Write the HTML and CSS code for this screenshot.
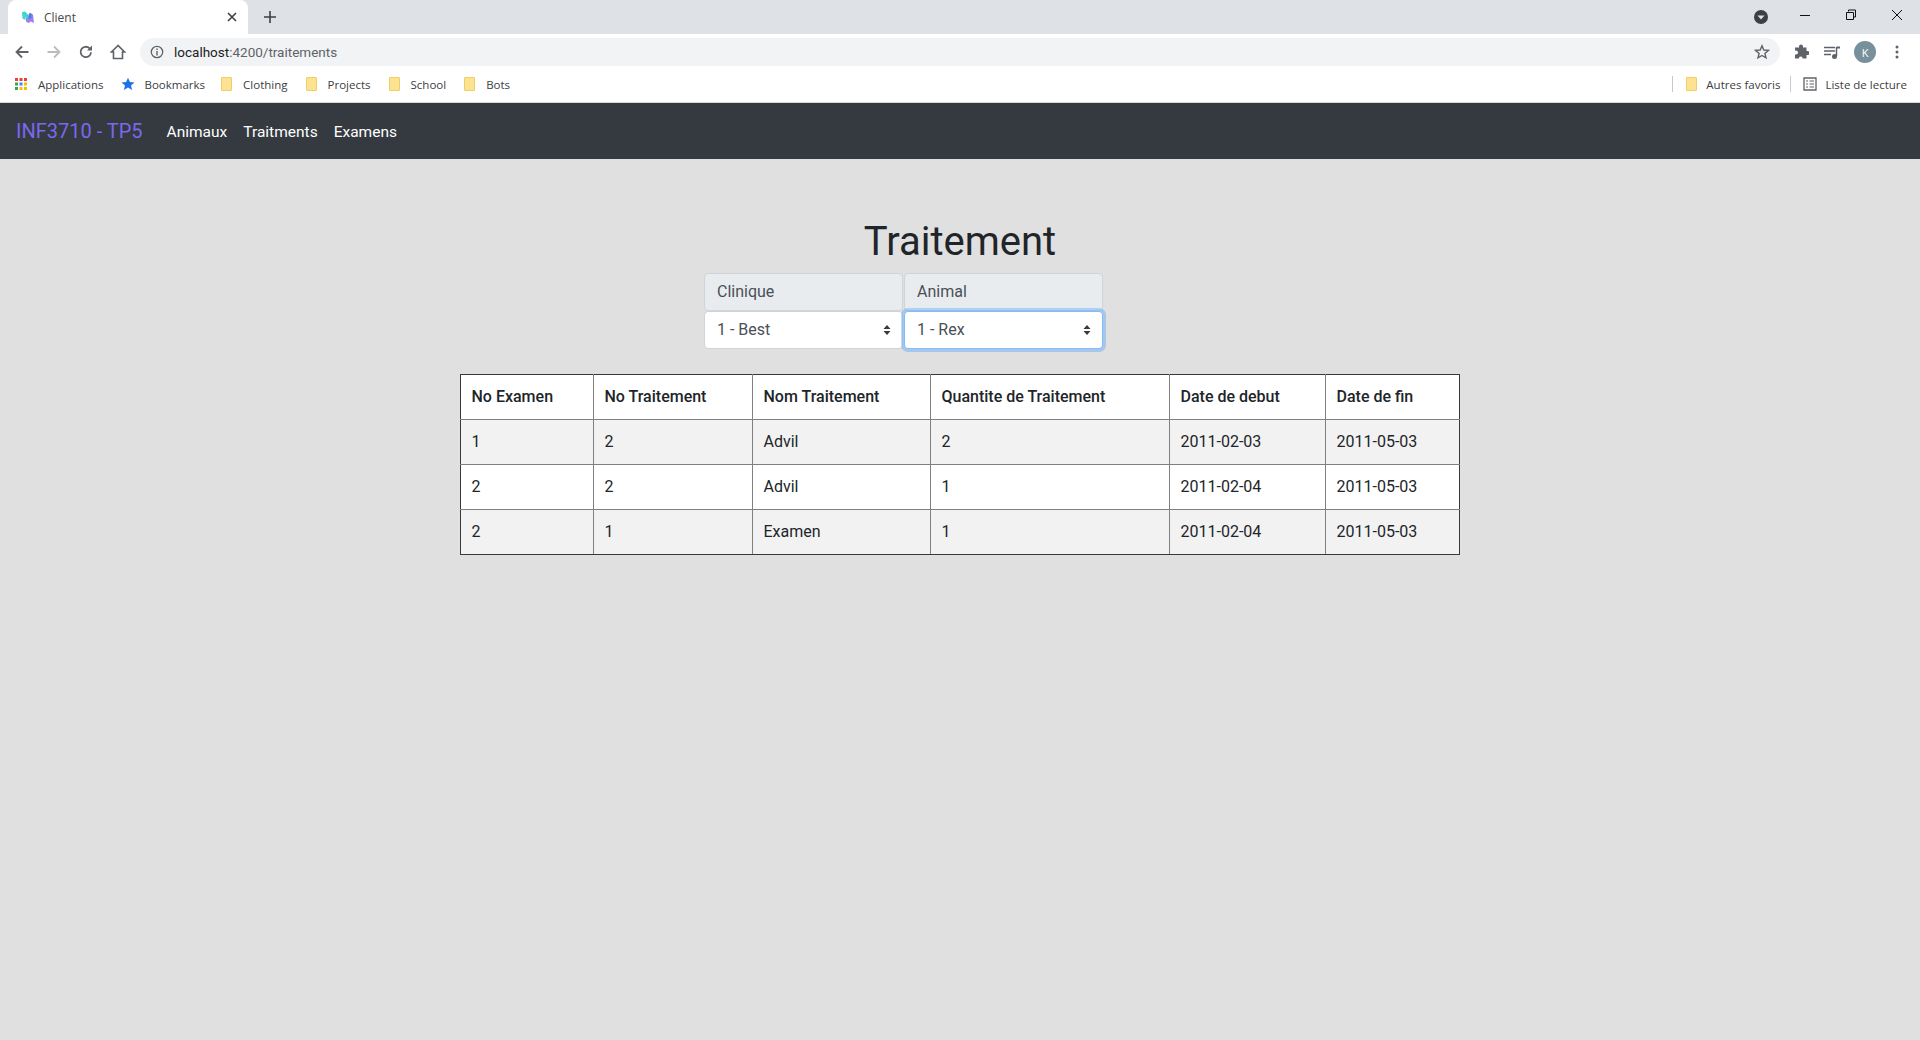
FILE: index.html
```html
<!DOCTYPE html>
<html lang="fr">
<head>
<meta charset="utf-8">
<title>Client</title>
<link rel="stylesheet" href="styles.css">
</head>
<body>
<div class="browser">
  <div class="tabstrip">
    <div class="tab">
      <svg class="favicon" viewBox="0 0 12 12" width="12" height="12"><path d="M4 3 L6.5 5.5 L7.5 2 L11 3.5 L12 12 L9 10.5 L6.5 12 L4 10.5Z" fill="#a07cf5"/><path d="M0 1 L3 .5 L6.5 4 L6.5 8 L3.5 6 L3.5 9 L.5 7.5Z" fill="#3fd6d0"/><path d="M6.5 4 L8 2 L9.5 2.5 L9.5 7 L6.5 8Z" fill="#4a7fe0"/></svg>
      <span class="tab-title">Client</span>
      <svg class="tab-close" viewBox="0 0 10 10" width="10" height="10"><path d="M1 1L9 9M9 1L1 9" stroke="#3c4043" stroke-width="1.6"/></svg>
    </div>
    <svg class="new-tab" viewBox="0 0 12 12" width="12" height="12"><path d="M6 0V12M0 6H12" stroke="#3c4043" stroke-width="1.6"/></svg>
    <div class="spacer"></div>
    <svg class="media-btn" viewBox="0 0 14 14" width="14" height="14"><circle cx="7" cy="7" r="7" fill="#3c4043"/><path d="M3.5 5.5H10.5L7 9.5Z" fill="#dee1e6"/></svg>
    <div class="win-btns">
      <svg viewBox="0 0 12 12" width="12" height="12"><path d="M1 6.5H11" stroke="#111" stroke-width="1"/></svg>
      <svg viewBox="0 0 12 12" width="12" height="12"><path d="M3.5 2.5V1H10.5V8H9M1.5 3.5H8.5V10.5H1.5Z" fill="none" stroke="#111" stroke-width="1"/></svg>
      <svg viewBox="0 0 12 12" width="12" height="12"><path d="M1 1L11 11M11 1L1 11" stroke="#111" stroke-width="1"/></svg>
    </div>
  </div>
  <div class="toolbar">
    <svg class="tool" viewBox="0 0 16 16" width="16" height="16"><path d="M14.5 8H2.5M8 2.5L2.5 8L8 13.5" fill="none" stroke="#5f6368" stroke-width="1.8"/></svg>
    <svg class="tool" viewBox="0 0 16 16" width="16" height="16"><path d="M1.5 8H13.5M8 2.5L13.5 8L8 13.5" fill="none" stroke="#babcbe" stroke-width="1.8"/></svg>
    <svg class="tool" viewBox="0 0 16 16" width="16" height="16"><path d="M13 8.2A5.2 5.2 0 1 1 11.6 4.4" fill="none" stroke="#5f6368" stroke-width="1.8"/><path d="M14 1.5V6.5H9Z" fill="#5f6368"/></svg>
    <svg class="tool" viewBox="0 0 16 16" width="16" height="16"><path d="M8 1.5L1.5 8H3.5V14.5H12.5V8H14.5Z" fill="none" stroke="#5f6368" stroke-width="1.6"/></svg>
    <div class="omnibox">
      <svg class="info" viewBox="0 0 14 14" width="14" height="14"><circle cx="7" cy="7" r="5.7" fill="none" stroke="#5f6368" stroke-width="1.3"/><path d="M7 6V10.5M7 3.5V5" stroke="#5f6368" stroke-width="1.4"/></svg>
      <span class="url"><span class="url-host">localhost</span>:4200/traitements</span>
      <div class="spacer"></div>
      <svg class="star" viewBox="0 0 16 16" width="16" height="16"><path d="M8 1.8L9.8 6L14.4 6.4L10.9 9.4L12 13.9L8 11.5L4 13.9L5.1 9.4L1.6 6.4L6.2 6Z" fill="none" stroke="#5f6368" stroke-width="1.4"/></svg>
    </div>
    <svg class="ext" viewBox="0 0 16 16" width="16" height="16"><path d="M6 2.5A2 2 0 0 1 10 2.5V3.5H13.5V7H14.5A2 2 0 0 1 14.5 11H13.5V14.5H9.5V13.5A2 2 0 0 0 6 13.5V14.5H2V10.5H3A2 2 0 0 0 3 6.5H2V3.5H6Z" fill="#5f6368"/></svg>
    <svg class="ext" viewBox="0 0 16 16" width="16" height="16"><path d="M0 3.5H11M0 7H11M0 10.5H7" stroke="#5f6368" stroke-width="1.3"/><path d="M12.5 3V12" stroke="#5f6368" stroke-width="1.5"/><path d="M12.5 2.5H16V4.5H12.5Z" fill="#5f6368"/><circle cx="10.5" cy="12.5" r="2.5" fill="#5f6368"/></svg>
    <div class="avatar">K</div>
    <svg class="dots" viewBox="0 0 4 16" width="4" height="16"><circle cx="2" cy="3" r="1.5" fill="#5f6368"/><circle cx="2" cy="8" r="1.5" fill="#5f6368"/><circle cx="2" cy="13" r="1.5" fill="#5f6368"/></svg>
  </div>
  <div class="bookmarks">
    <span class="bm bm-apps">
      <svg class="apps" viewBox="0 0 12 12" width="12" height="12">
        <rect x="0" y="0" width="3" height="3" fill="#ea4335"/><rect x="4.5" y="0" width="3" height="3" fill="#ea4335"/><rect x="9" y="0" width="3" height="3" fill="#ea4335"/>
        <rect x="0" y="4.5" width="3" height="3" fill="#34a853"/><rect x="4.5" y="4.5" width="3" height="3" fill="#4285f4"/><rect x="9" y="4.5" width="3" height="3" fill="#fbbc05"/>
        <rect x="0" y="9" width="3" height="3" fill="#34a853"/><rect x="4.5" y="9" width="3" height="3" fill="#fbbc05"/><rect x="9" y="9" width="3" height="3" fill="#fbbc05"/>
      </svg>Applications</span>
    <span class="bm bm-star"><svg class="bm-icon" viewBox="0 0 14 14" width="14" height="14"><path d="M7 .8L8.9 5L13.5 5.4L10 8.4L11.1 13L7 10.5L2.9 13L4 8.4L.5 5.4L5.1 5Z" fill="#1a73e8"/></svg>Bookmarks</span>
    <span class="bm"><span class="folder"></span>Clothing</span>
    <span class="bm"><span class="folder"></span>Projects</span>
    <span class="bm"><span class="folder"></span>School</span>
    <span class="bm"><span class="folder"></span>Bots</span>
    <div class="spacer"></div>
    <span class="sep"></span>
    <span class="bm bm-other"><span class="folder"></span>Autres favoris</span>
    <span class="sep"></span>
    <span class="bm bm-read"><svg class="bm-icon" viewBox="0 0 14 14" width="14" height="14"><path d="M1 1H13V13H1Z" fill="none" stroke="#5f6368" stroke-width="1.3"/><path d="M3 4H5M6.5 4H11M3 7H5M6.5 7H11M3 10H5M6.5 10H11" stroke="#5f6368" stroke-width="1.2"/></svg>Liste de lecture</span>
  </div>
</div>
<nav class="navbar">
  <a class="brand">INF3710 - TP5</a>
  <a class="nav-link">Animaux</a>
  <a class="nav-link">Traitments</a>
  <a class="nav-link">Examens</a>
</nav>
<main class="content">
  <h1 class="title">Traitement</h1>
  <div class="selectors">
    <div class="group">
      <div class="group-label">Clinique</div>
      <div class="select"><span>1 - Best</span><svg class="caret" viewBox="0 0 8 10" width="8" height="10"><path d="M4 0L7.5 4H.5ZM4 10L.5 6H7.5Z" fill="#343a40"/></svg></div>
    </div>
    <div class="group">
      <div class="group-label">Animal</div>
      <div class="select focused"><span>1 - Rex</span><svg class="caret" viewBox="0 0 8 10" width="8" height="10"><path d="M4 0L7.5 4H.5ZM4 10L.5 6H7.5Z" fill="#343a40"/></svg></div>
    </div>
  </div>
  <table class="data">
    <colgroup>
      <col class="c1"><col class="c2"><col class="c3"><col class="c4"><col class="c5"><col class="c6">
    </colgroup>
    <thead>
      <tr><th>No Examen</th><th>No Traitement</th><th>Nom Traitement</th><th>Quantite de Traitement</th><th>Date de debut</th><th>Date de fin</th></tr>
    </thead>
    <tbody>
      <tr class="odd"><td>1</td><td>2</td><td>Advil</td><td>2</td><td>2011-02-03</td><td>2011-05-03</td></tr>
      <tr><td>2</td><td>2</td><td>Advil</td><td>1</td><td>2011-02-04</td><td>2011-05-03</td></tr>
      <tr class="odd"><td>2</td><td>1</td><td>Examen</td><td>1</td><td>2011-02-04</td><td>2011-05-03</td></tr>
    </tbody>
  </table>
</main>
</body>
</html>
```
FILE: styles.css
```css
* { box-sizing: border-box; }
html, body { height: 100%; margin: 0; }
body {
  background: #e0e0e0;
  font-family: Roboto, "Liberation Sans", sans-serif;
  color: #212529;
  overflow: hidden;
  display: flex;
  flex-direction: column;
}
.spacer { flex: 1; }
.browser { background: #fff; height: 103px; flex: none; border-bottom: 1px solid #d6d7d9; font-family: "Open Sans", "Noto Sans", sans-serif; }
.tabstrip { height: 34px; background: #dee1e6; display: flex; align-items: center; padding-left: 8px; }
.tab { width: 240px; height: 34px; background: #fff; border-radius: 8px 8px 0 0; display: flex; align-items: center; padding-left: 14px; padding-right: 11px; }
.favicon { margin-right: 10px; }
.tab-title { font-size: 12px; color: #45484c; flex: 1; }
.new-tab { margin-left: 16px; }
.media-btn { margin-right: 31px; }
.win-btns { display: flex; gap: 34px; padding-right: 17px; margin-top: -5px; }
.toolbar { height: 34px; padding-top: 2px; display: flex; align-items: center; padding-left: 14px; }
.tool { margin-right: 16px; }
.omnibox { width: 1640px; height: 28px; margin-left: -2px; background: #f1f3f4; border-radius: 14px; display: flex; align-items: center; padding: 0 10px; margin-right: 13px; }
.info { margin-right: 10px; }
.url { font-size: 13.5px; color: #5f6368; font-family: Roboto, sans-serif; }
.url-host { color: #202124; }
.ext { margin-right: 15px; }
.avatar { width: 22px; height: 22px; border-radius: 50%; background: #78909c; color: #fff; font-size: 11px; display: flex; align-items: center; justify-content: center; margin-left: -1px; margin-right: 19px; }
.bookmarks { height: 34px; padding-bottom: 2px; display: flex; align-items: center; padding-left: 15px; padding-right: 13px; font-size: 11.5px; color: #3c4043; }
.bm { display: inline-flex; align-items: center; margin-right: 18px; }
.bm-apps { margin-right: 17px; }
.bm-star { margin-right: 16px; }
.apps { margin-right: 11px; }
.bm-icon { margin-right: 10px; }
.folder { width: 11px; height: 14px; margin-right: 11px; background: #fde293; border: 1px solid #f0cf62; border-radius: 1px; }
.bm-other { margin-left: 13px; margin-right: 10px; }
.bm-other .folder { margin-right: 9px; }
.bm-read { margin-left: 12px; margin-right: 0; }
.bm-read .bm-icon { margin-right: 8px; }
.sep { width: 1px; height: 16px; background: #c8c9cb; }
.navbar { height: 56px; flex: none; background: #343a40; display: flex; align-items: center; padding: 0 16px; }
.brand { font-size: 20px; color: #7b68ee; margin-right: 24px; }
.nav-link { font-size: 15.5px; color: #fff; margin-right: 16px; padding-top: 1px; }
.content { display: flex; flex-direction: column; align-items: center; }
.title { font-size: 40px; font-weight: 400; line-height: 48px; margin: 59px 0 7px; }
.selectors { display: flex; gap: 1px; margin-bottom: 25px; margin-right: 113px; }
.group { width: 199px; }
.group-label { height: 38px; background: #e9ecef; border: 1px solid #ced4da; border-radius: 4px; padding: 6px 12px; font-size: 16px; line-height: 24px; color: #495057; }
.select { height: 38px; background: #fff; border: 1px solid #ced4da; border-radius: 4px; padding: 6px 11px 6px 12px; font-size: 16px; line-height: 24px; color: #495057; display: flex; align-items: center; justify-content: space-between; }
.select.focused { border-color: #80bdff; box-shadow: 0 0 0 3px rgba(0,123,255,.25); }
.data { width: 999px; margin-right: 1px; table-layout: fixed; border-collapse: collapse; font-size: 16px; line-height: 24px; }
.c1 { width: 133px; } .c2 { width: 159px; } .c3 { width: 178px; } .c4 { width: 239px; } .c5 { width: 156px; } .c6 { width: 134px; }
.data th, .data td { border: 1px solid #808080; padding: 10px 10px 10px 11px; text-align: left; background: #fff; height: 45px; }
.data th { font-weight: 500; border-top-color: #343a40; }
.data tr > :first-child { border-left-color: #343a40; }
.data tr > :last-child { border-right-color: #343a40; }
.data tbody tr:last-child td { border-bottom-color: #343a40; }
.data .odd td { background: #f2f2f2; }
```
